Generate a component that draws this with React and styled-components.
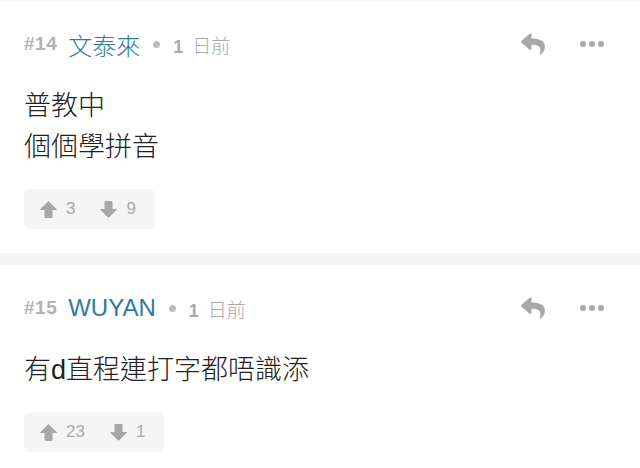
import React from 'react';
import styled, { createGlobalStyle } from 'styled-components';
import { FaReply } from 'react-icons/fa';

const GlobalStyle = createGlobalStyle`
  body {
    margin: 0;
    background: #fff;
    font-family: "Liberation Sans", "Noto Sans CJK TC", sans-serif;
  }
`;

const Page = styled.div`
  width: 640px;
  border-top: 1px solid #f8f8f8;
`;

const Post = styled.article`
  padding: 27px 24px 24px 24px;
`;

const Separator = styled.div`
  height: 12px;
  background: #f4f4f4;
`;

const Header = styled.div`
  display: flex;
  align-items: center;
  height: 32px;
`;

const Meta = styled.div`
  display: flex;
  align-items: center;
  flex: 1;
`;

const Floor = styled.span`
  font-size: 19px;
  font-weight: bold;
  color: #b3b3b3;
  letter-spacing: 0.5px;
  margin-right: 11px;
`;

const Name = styled.span`
  font-size: 24px;
  font-weight: 300;
  color: #2f7aa3;
`;

const Dot = styled.span`
  width: 7px;
  height: 7px;
  border-radius: 50%;
  background: #bbb;
  margin: 0 13px 0 13px;
`;

const Time = styled.span`
  font-size: 19px;
  font-weight: 300;
  color: #aaa;

  b {
    font-size: 18px;
    font-weight: bold;
    margin-right: 9px;
  }
`;

const Actions = styled.div`
  display: flex;
  align-items: center;
  gap: 35px;
  color: #a8a8a8;
  padding-right: 12px;
`;

const More = styled.div`
  display: flex;
  gap: 3px;

  span {
    width: 6px;
    height: 6px;
    border-radius: 50%;
    background: #a8a8a8;
  }
`;

const Content = styled.div`
  margin-top: 26px;
  font-size: 27px;
  font-weight: 300;
  line-height: 41px;
  color: #222;
`;

const Votes = styled.div`
  display: inline-flex;
  align-items: center;
  margin-top: 21px;
  height: 40px;
  padding: 0 19px 0 16px;
  background: #f5f5f5;
  border-radius: 6px;
  color: #aaa;
  font-size: 17px;
`;

const Vote = styled.span`
  display: flex;
  align-items: center;
  gap: 9px;
  & + & {
    margin-left: 25px;
  }
`;

const Arrow = ({ down }) => (
  <svg width="17" height="17" viewBox="0 0 17 17" style={down ? { transform: 'rotate(180deg)' } : undefined}>
    <path d="M8.5 0.5 L16.5 8.5 L12 8.5 L12 16 Q12 17 11 17 L6 17 Q5 17 5 16 L5 8.5 L0.5 8.5 Z" fill="#a8a8a8" strokeLinejoin="round" stroke="#a8a8a8" strokeWidth="1" />
  </svg>
);

const Comment = ({ floor, name, lines, up, down }) => (
  <Post>
    <Header>
      <Meta>
        <Floor>#{floor}</Floor>
        <Name>{name}</Name>
        <Dot />
        <Time><b>1</b>日前</Time>
      </Meta>
      <Actions>
        <FaReply size={24} />
        <More><span /><span /><span /></More>
      </Actions>
    </Header>
    <Content>
      {lines.map((l) => <div key={l}>{l}</div>)}
    </Content>
    <Votes>
      <Vote><Arrow />{up}</Vote>
      <Vote><Arrow down />{down}</Vote>
    </Votes>
  </Post>
);

export default function App() {
  return (
    <Page>
      <GlobalStyle />
      <Comment floor={14} name="文泰來" lines={['普教中', '個個學拼音']} up={3} down={9} />
      <Separator />
      <Comment floor={15} name="WUYAN" lines={['有d直程連打字都唔識添']} up={23} down={1} />
    </Page>
  );
}
